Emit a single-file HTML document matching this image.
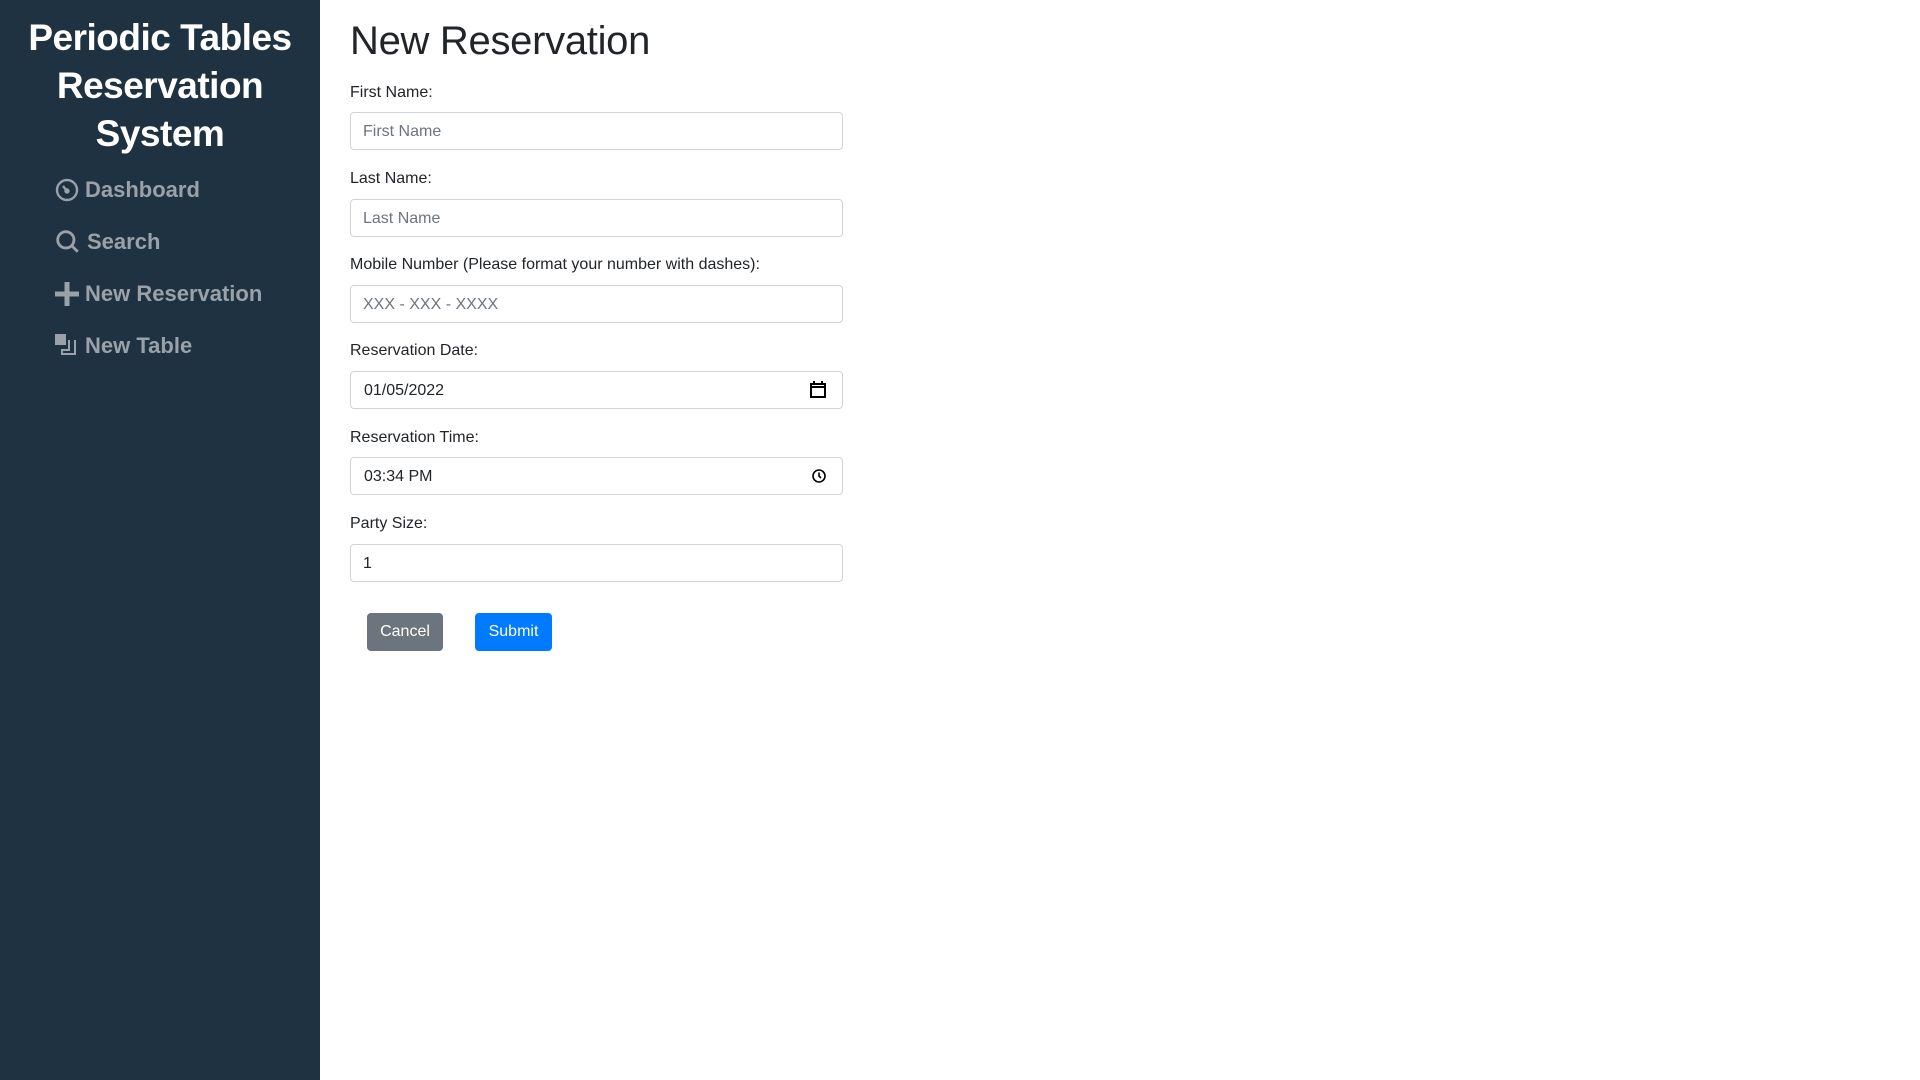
<!DOCTYPE html>
<html><head><meta charset="utf-8"><style>
*{box-sizing:border-box;margin:0;padding:0}
body{width:1920px;height:1080px;font-family:"Liberation Sans",Arial,sans-serif;background:#fff;position:relative;overflow:hidden;color:#212529}
.side{position:absolute;left:0;top:0;width:320px;height:1080px;background:#1f3241}
.side h1{color:#fff;font-size:37px;font-weight:700;line-height:48px;text-align:center;margin-top:14px;letter-spacing:-0.5px}
.nav{position:absolute;left:55px;color:#9aa1a8;font-size:22px;font-weight:700;display:flex;align-items:center;gap:6px;height:30px}
.nav svg{flex:none}
h2{position:absolute;left:350px;top:17px;font-size:40px;font-weight:500;line-height:48px;letter-spacing:-0.3px}
label{position:absolute;left:350px;font-size:16px;line-height:20px}
.in{position:absolute;left:350px;width:493px;height:38px;border:1px solid #ced4da;border-radius:4px;font-size:16px;line-height:38px;padding-left:12px;color:#6c757d}
.in.v{color:#212529}
.btn{position:absolute;top:613px;height:38px;border-radius:4px;color:#fff;font-size:16px;line-height:38px;text-align:center}
</style></head><body>
<div class="side"><h1>Periodic Tables<br>Reservation<br>System</h1></div>
<div class="nav" style="top:175px"><svg width="24" height="24" viewBox="0 0 24 24" fill="none" stroke="#9aa1a8" stroke-width="2.4"><circle cx="12" cy="12" r="10"/><path d="M12 13 L8 8"/><circle cx="12" cy="13" r="1.5" fill="#9aa1a8"/></svg>Dashboard</div>
<div class="nav" style="top:227px"><svg width="26" height="26" viewBox="0 0 24 24" fill="none" stroke="#9aa1a8" stroke-width="2.6"><circle cx="10" cy="10" r="7.5"/><path d="M15.5 15.5 L21 21"/></svg>Search</div>
<div class="nav" style="top:279px"><svg width="24" height="24" viewBox="0 0 24 24"><path d="M9.5 0h5v9.5H24v5h-9.5V24h-5v-9.5H0v-5h9.5z" fill="#9aa1a8"/></svg>New Reservation</div>
<div class="nav" style="top:331px"><svg width="24" height="24" viewBox="0 0 24 24"><rect x="0" y="0" width="11" height="11" fill="#9aa1a8"/><path d="M13 6v9H6v6h15V6h-2v13H8v-2h7V6z" fill="#9aa1a8"/></svg>New Table</div>
<h2>New Reservation</h2>
<label style="top:83px">First Name:</label><div class="in" style="top:112px">First Name</div>
<label style="top:169px">Last Name:</label><div class="in" style="top:199px">Last Name</div>
<label style="top:255px">Mobile Number (Please format your number with dashes):</label><div class="in" style="top:285px">XXX - XXX - XXXX</div>
<label style="top:341px">Reservation Date:</label><div class="in v" style="top:371px;padding-left:13px">01/05/2022<svg style="position:absolute;right:16px;top:9px" width="16" height="17" viewBox="0 0 16 17" fill="none" stroke="#000" stroke-width="2"><rect x="1" y="3" width="14" height="13"/><path d="M1 6h14M4 0v3M12 0v3"/></svg></div>
<label style="top:428px">Reservation Time:</label><div class="in v" style="top:457px;padding-left:13px">03:34 PM<svg style="position:absolute;right:16px;top:11px" width="14" height="14" viewBox="0 0 14 14" fill="none" stroke="#000" stroke-width="1.6"><circle cx="7" cy="7" r="6"/><path d="M7 3.5V7l2 2"/></svg></div>
<label style="top:514px">Party Size:</label><div class="in v" style="top:544px">1</div>
<div class="btn" style="left:367px;width:76px;background:#6c757d">Cancel</div>
<div class="btn" style="left:475px;width:77px;background:#007bff">Submit</div>
</body></html>
